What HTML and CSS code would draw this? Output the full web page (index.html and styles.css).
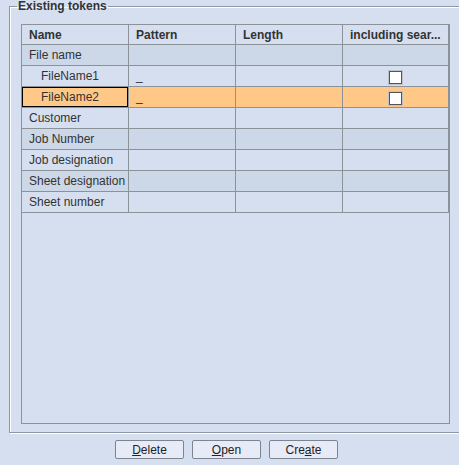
FILE: index.html
```html
<!doctype html>
<html lang="en">
  <head>
    <meta charset="UTF-8" />
    <title>Existing tokens</title>
    <link rel="stylesheet" href="styles.css">
  </head>
  <body>
    <fieldset class="group">
      <legend class="group-title">Existing tokens</legend>
      <div class="token-pane">
        <table class="token-table">
          <colgroup>
            <col class="col-std" />
            <col class="col-std" />
            <col class="col-std" />
            <col class="col-last" />
          </colgroup>
          <thead>
            <tr>
              <th>Name</th>
              <th>Pattern</th>
              <th>Length</th>
              <th>including sear...</th>
            </tr>
          </thead>
          <tbody>
            <tr>
              <td>File name</td><td></td><td></td><td></td>
            </tr>
            <tr>
              <td class="indent">FileName1</td><td>_</td><td></td>
              <td class="check-cell"><span class="check"></span></td>
            </tr>
            <tr class="selected">
              <td class="indent focused">FileName2</td><td>_</td><td></td>
              <td class="check-cell"><span class="check"></span></td>
            </tr>
            <tr>
              <td>Customer</td><td></td><td></td><td></td>
            </tr>
            <tr>
              <td>Job Number</td><td></td><td></td><td></td>
            </tr>
            <tr>
              <td>Job designation</td><td></td><td></td><td></td>
            </tr>
            <tr>
              <td>Sheet designation</td><td></td><td></td><td></td>
            </tr>
            <tr>
              <td>Sheet number</td><td></td><td></td><td></td>
            </tr>
          </tbody>
        </table>
      </div>
    </fieldset>

    <div class="actions">
      <button type="button"><u>D</u>elete</button>
      <button type="button"><u>O</u>pen</button>
      <button type="button">Cre<u>a</u>te</button>
    </div>
  </body>
</html>
```

FILE: styles.css
```css
body {
  margin: 0;
  background: #d6dff0;
  font-family: 'Liberation Sans', Arial, sans-serif;
  font-size: 12px;
  color: #333;
  overflow: hidden;
}

/* etched group box, runs off the right edge */
.group {
  margin: 0 -20px 0 9px;
  padding: 0 0 8px 0;
  border: 1px solid #8e97a2;
  box-shadow: inset 1px 1px 0 #fff, 1px 1px 0 #fff;
  min-width: 0;
}
.group-title {
  margin-left: 7px;
  padding: 0 1px;
  font-weight: bold;
  line-height: 13px;
  color: #333;
}

.token-pane {
  margin: 11px 0 0 11px;
  width: 427px;
  height: 398px;
  border: 1px solid #8b9399;
  background: #d6dff0;
}

.token-table {
  table-layout: fixed;
  width: 427px;
  border-collapse: separate;
  border-spacing: 0;
}
.col-std {
  width: 107px;
}
.col-last {
  width: 106px;
}
.token-table th,
.token-table td {
  padding: 0 0 0 7px;
  border-right: 1px solid #8b9399;
  border-bottom: 1px solid #8b9399;
  text-align: left;
  white-space: nowrap;
  overflow: hidden;
  line-height: 14px;
  vertical-align: middle;
}
.token-table th {
  font-weight: bold;
}
.token-table thead tr {
  height: 20px;
}
.token-table tbody tr {
  height: 21px;
}
.token-table tbody tr:nth-child(odd) {
  background: #ccd7e7;
}
.token-table tbody tr.selected {
  background: #ffc887;
}
.token-table td.indent {
  padding-left: 19px;
}
.token-table td.focused {
  box-shadow: inset 0 0 0 1px #000;
}
.token-table td.check-cell {
  padding: 0;
  text-align: center;
}
.check {
  display: inline-block;
  width: 11px;
  height: 11px;
  margin-top: 2px;
  border: 1px solid #555;
  background: #fff;
  box-shadow: 0 0 0 1px #bcc3cc;
  vertical-align: middle;
}

.actions {
  display: flex;
  justify-content: center;
  gap: 8px;
  margin-top: 7px;
  padding-right: 6px;
}
.actions button {
  width: 69px;
  height: 19px;
  padding: 0;
  border: 1px solid #7d848d;
  border-radius: 2px;
  background: #e7ebf7;
  font-family: 'Liberation Sans', Arial, sans-serif;
  font-size: 12px;
  color: #222;
}
```
